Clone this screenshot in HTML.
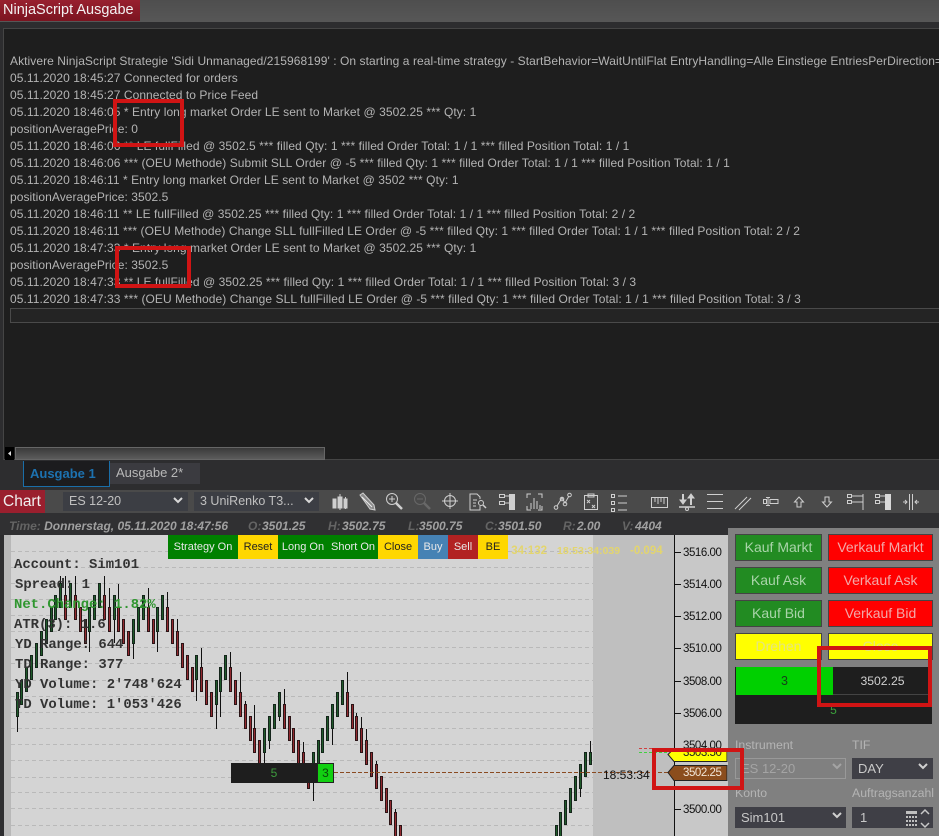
<!DOCTYPE html>
<html><head><meta charset="utf-8"><style>
html,body{margin:0;padding:0}
body{width:939px;height:836px;overflow:hidden;background:#2d2d2f;position:relative;font-family:"Liberation Sans",sans-serif}
.a{position:absolute;white-space:nowrap}
.l{position:absolute;left:10px;width:929px;overflow:hidden;margin-top:1px;font-size:12px;letter-spacing:.065px;line-height:17px;height:17px;color:#b4b4b4;white-space:nowrap}
.b{position:absolute;top:535px;height:24px;line-height:24px;text-align:center;font-size:11px;color:#e8e8e8}
.p{position:absolute;font-size:14px;text-align:center;box-sizing:border-box;border:1px solid #444;height:27px;line-height:25px}
.g{background:#228b22;color:#a9d4a9;width:87px;left:735px}
.r{background:#ff0000;color:#f2a8a8;width:105px;left:828px}
.y{background:#ffff00;color:#e4e480}
.ax{position:absolute;left:683px;font-size:11.5px;letter-spacing:-.45px;color:#111;line-height:14px}
.sl{position:absolute;box-sizing:border-box;background:#3f3f46;color:#c8c8c8;font-size:13px;line-height:21px;padding-left:6px}
.lb{position:absolute;font-size:12.3px;color:#b4b4b4;line-height:14px}
.m{position:absolute;left:14px;margin-top:1px;font-family:"Liberation Mono",monospace;font-weight:bold;font-size:13.9px;line-height:16px;color:#333;white-space:pre}
.red{position:absolute;box-sizing:border-box;border:4px solid #d01414}
.t{position:absolute;top:519px;font-size:12px;font-weight:bold;font-style:italic;line-height:14px;white-space:nowrap;color:#a0a0a0}
.t i{color:#646464}
</style></head><body>

<div class="a" style="left:0;top:0;width:939px;height:22px;background:linear-gradient(#4e4e4e,#575757)"></div>
<div class="a" style="left:0;top:0;width:140px;height:21px;background:linear-gradient(#98202f,#7c1420);color:#f2f2f2;font-size:14.5px;line-height:20px;text-indent:3px">NinjaScript Ausgabe</div>

<div class="a" style="left:3px;top:28px;width:936px;height:432px;box-sizing:border-box;background:#1e1e1e;border:1px solid #454545;border-right:0"></div>
<div class="l" style="top:52px">Aktivere NinjaScript Strategie 'Sidi Unmanaged/215968199' : On starting a real-time strategy - StartBehavior=WaitUntilFlat EntryHandling=Alle Einstiege EntriesPerDirection=1 StopTargetHandling=Per entry</div>
<div class="l" style="top:69px">05.11.2020 18:45:27 Connected for orders</div>
<div class="l" style="top:86px">05.11.2020 18:45:27 Connected to Price Feed</div>
<div class="l" style="top:103px">05.11.2020 18:46:05 * Entry long market Order LE sent to Market @ 3502.25 *** Qty: 1</div>
<div class="l" style="top:120px">positionAveragePrice: 0</div>
<div class="l" style="top:137px">05.11.2020 18:46:06 ** LE fullFilled @ 3502.5 *** filled Qty: 1 *** filled Order Total: 1 / 1 *** filled Position Total: 1 / 1</div>
<div class="l" style="top:154px">05.11.2020 18:46:06 *** (OEU Methode) Submit SLL Order @ -5 *** filled Qty: 1 *** filled Order Total: 1 / 1 *** filled Position Total: 1 / 1</div>
<div class="l" style="top:171px">05.11.2020 18:46:11 * Entry long market Order LE sent to Market @ 3502 *** Qty: 1</div>
<div class="l" style="top:188px">positionAveragePrice: 3502.5</div>
<div class="l" style="top:205px">05.11.2020 18:46:11 ** LE fullFilled @ 3502.25 *** filled Qty: 1 *** filled Order Total: 1 / 1 *** filled Position Total: 2 / 2</div>
<div class="l" style="top:222px">05.11.2020 18:46:11 *** (OEU Methode) Change SLL fullFilled LE Order @ -5 *** filled Qty: 1 *** filled Order Total: 1 / 1 *** filled Position Total: 2 / 2</div>
<div class="l" style="top:239px">05.11.2020 18:47:33 * Entry long market Order LE sent to Market @ 3502.25 *** Qty: 1</div>
<div class="l" style="top:256px">positionAveragePrice: 3502.5</div>
<div class="l" style="top:273px">05.11.2020 18:47:33 ** LE fullFilled @ 3502.25 *** filled Qty: 1 *** filled Order Total: 1 / 1 *** filled Position Total: 3 / 3</div>
<div class="l" style="top:290px">05.11.2020 18:47:33 *** (OEU Methode) Change SLL fullFilled LE Order @ -5 *** filled Qty: 1 *** filled Order Total: 1 / 1 *** filled Position Total: 3 / 3</div>
<div class="a" style="left:10px;top:308px;width:929px;height:15px;box-sizing:border-box;border:1px solid #4a4a4a;border-right:0;background:#242424"></div>

<div class="a" style="left:5px;top:447px;width:9px;height:13px;background:#000"></div>
<svg class="a" style="left:5px;top:447px" width="9" height="13"><path d="M6 4v5L3 6.500z" fill="#ddd"/></svg>
<div class="a" style="left:15px;top:447px;width:310px;height:13px;box-sizing:border-box;border:1px solid #666;background:linear-gradient(#3a3a3a,#5c5c5c)"></div>

<div class="a" style="left:23px;top:461px;width:87px;height:26px;box-sizing:border-box;border:1px solid #1a6ea8;border-top:0;background:#1c1c1e;color:#1d72b0;font-weight:bold;font-size:13px;line-height:25px;text-indent:6px">Ausgabe 1</div>
<div class="a" style="left:110px;top:463px;width:90px;height:21px;background:#3b3b40;color:#b8b8b8;font-size:13px;line-height:20px;text-indent:6px">Ausgabe 2*</div>

<div class="a" style="left:0;top:490px;width:939px;height:23px;background:#4a4a4a"></div>
<div class="a" style="left:0;top:490px;width:45px;height:23px;background:#9a1f2e;color:#f0f0f0;font-size:15.5px;line-height:23px;text-indent:3px">Chart</div>
<div class="a" style="left:63px;top:492px;width:125px;height:19px;background:#3c3e44;color:#c0c0c0;font-size:12.5px;line-height:19px;text-indent:6px">ES 12-20</div>
<div class="a" style="left:194px;top:492px;width:125px;height:19px;background:#3c3e44;color:#c0c0c0;font-size:12.5px;line-height:19px;text-indent:6px">3 UniRenko T3...</div>
<svg class="a" style="left:0;top:488px" width="939" height="28" fill="none" stroke="#cfcfcf" stroke-width="1">
<path d="M174 10l4 4 4-4M305 10l4 4 4-4" stroke="#d8d8d8" stroke-width="2"/>
<g transform="translate(0,-488)">
<path d="M334 501v7M340 494v16M345.500 497v12" />
<rect x="333" y="499" width="3" height="9" fill="#cfcfcf"/><rect x="338" y="497" width="4" height="11" fill="#cfcfcf"/><rect x="344" y="499" width="3" height="9" fill="#cfcfcf"/>
<path d="M360 495l3-2 11 12 1 5-5-1z" fill="#8a8a8a"/><path d="M362 497l10 10" stroke="#ececec"/>
<circle cx="392" cy="499" r="5.500"/><path d="M389 499h6M392 496v6"/><path d="M396 503l6 6" stroke-width="2.500"/>
<g stroke="#686868"><circle cx="420" cy="499" r="5.500"/><path d="M417 499h6"/><path d="M424 503l6 6" stroke-width="2.500"/></g>
<circle cx="450" cy="501" r="5.500"/><path d="M450 493v16M442 501h16"/>
<path d="M480 506v4h-10v-16h7l3 3v2M473 500h4M473 503h3M473 506h3"/><circle cx="481" cy="503" r="2.500"/><path d="M483 505l3 3" stroke-width="1.500"/>
<path d="M499.500 494.500h5v3h-5zM499.500 501.500h5v3h-5zM504 496h5M504 503h5"/><rect x="509" y="494" width="6" height="16" fill="#d0d0d0" stroke="none"/>
<path d="M527 498v-4h4M538 494h4v4M527 506v4h4M538 510h4v-4M531 509v-6M534 509v-11M537 509v-8M540 509v-4" />
<path d="M557 506l5-8 3 5 4-7"/><circle cx="556" cy="507.500" r="1.800"/><circle cx="562" cy="499" r="1.800"/><circle cx="565" cy="504" r="1.800"/><circle cx="569.500" cy="495" r="1.800"/>
<path d="M584.500 495.500h13v14h-13zM588 494h6v3h-6zM587 500l3 3m0-3l-3 3M592 505l3 3m0-3l-3 3"/>
<path d="M611.500 494.500h3v3h-3zM611.500 501.500h3v3h-3zM611.500 508.500h3v3h-3zM618 496h9M618 503h9M618 510h9"/>
<path d="M651.500 497.500h16v10h-16zM655 498v4M658 498v6M661 498v4M664 498v6"/>
<path d="M679 507h16" stroke-width="1.500"/><circle cx="687" cy="509" r="1.500"/><path d="M683 494v6M691 505v-7" stroke-width="2"/><path d="M680 500h6l-3 4zM688 498h6l-3-4z" fill="#cfcfcf"/>
<path d="M707 494.500h16M707 501.500h16M707 508.500h16"/>
<path d="M735 509l12-12M739 510l12-12"/>
<path d="M768 497.500v8M766 497.500h4M766 505.500h4M763.500 499.500h3v4h-3zM770 499.500h8v4h-8z"/>
<path d="M799 497l4.500 5h-2.500v5h-4v-5h-2.500z"/>
<path d="M827 507l4.500-5h-2.500v-5h-4v5h-2.500z"/>
<path d="M847.500 494.500h4v3h-4zM847.500 500.500h4v3h-4zM851 496h12M851 502h12M863 494v16"/>
<path d="M875.500 494.500h4v3h-4zM875.500 500.500h4v3h-4zM879 496h6M879 502h6"/><rect x="885" y="494" width="6" height="16" fill="#d8d8d8" stroke="none"/>
<path d="M909.500 494v16M912.500 494v16M903 502h4M919 502h-4M905 500l2 2-2 2M917 500l-2 2 2 2"/>
</g></svg>

<div class="a" style="left:0;top:513px;width:939px;height:22px;background:#303032"></div>
<div class="t" style="left:9px"><i>Time:</i> Donnerstag, 05.11.2020 18:47:56</div>
<div class="t" style="left:248px"><i>O:</i></div><div class="t" style="left:262px">3501.25</div>
<div class="t" style="left:328px"><i>H:</i></div><div class="t" style="left:342px">3502.75</div>
<div class="t" style="left:408px"><i>L:</i></div><div class="t" style="left:419px">3500.75</div>
<div class="t" style="left:485px"><i>C:</i></div><div class="t" style="left:498px">3501.50</div>
<div class="t" style="left:563px"><i>R:</i></div><div class="t" style="left:577px">2.00</div>
<div class="t" style="left:622px"><i>V:</i></div><div class="t" style="left:635px">4404</div>

<div class="a" style="left:4px;top:535px;width:7px;height:301px;background:#b8b8b8"></div>
<div class="a" style="left:11px;top:535px;width:582px;height:301px;background:#d4d4d4"></div>
<div class="a" style="left:593px;top:535px;width:81px;height:301px;background:#bfbfbf"></div>
<div class="a" style="left:675px;top:535px;width:54px;height:301px;background:#c8c8c8"></div>
<div class="a" style="left:674px;top:535px;width:1px;height:301px;background:#111"></div>

<svg class="a" style="left:0;top:0" width="939" height="836">
<path stroke="#b9b9b9" stroke-dasharray="4 3" fill="none" d="M11 551.500H593M11 567.500H593M11 583.500H593M11 599.500H593M11 615.500H593M11 631.500H593M11 647.500H593M11 663.500H593M11 680.500H593M11 696.500H593M11 712.500H593M11 728.500H593M11 744.500H593M11 760.500H593M11 777.500H593M11 792.500H593M11 808.500H593M11 825.500H593"/>
<path stroke="#111" fill="none" d="M674 552.500h7M674 584.500h7M674 616.500h7M674 648.500h7M674 681.500h7M674 713.500h7M674 809.500h7"/>
<path stroke="#111" fill="none" d="M17.500 716V732M60.500 576V583M65.500 576V595M75.500 576V595M89.500 631V652M104.500 576V595M109.500 588V607M114.500 619V643M118.500 584V607M133.500 643V659M148.500 588V607M157.500 631V652M167.500 592V607M177.500 619V631M196.500 680V701M201.500 648V667M216.500 704V729M220.500 691V717M230.500 652V667M240.500 672V692M245.500 701V704M254.500 705V728M264.500 752V763M269.500 740V749M279.500 716V721M284.500 689V704M303.500 742V752M313.500 776V801M332.500 728V745M347.500 672V692M356.500 713V716M361.500 717V728M366.500 729V740M376.500 761V764M395.500 809V812M580.500 788V797M590.500 741V752"/>
<path fill="#1f5a2a" stroke="#14241a" d="M16.500 692.500h2v24h-2zM20.500 680.500h2v24h-2zM25.500 667.500h2v24h-2zM30.500 655.500h2v24h-2zM35.500 643.500h2v24h-2zM40.500 631.500h2v24h-2zM45.500 619.500h2v24h-2zM50.500 607.500h2v24h-2zM54.500 595.500h2v24h-2zM59.500 583.500h2v24h-2zM69.500 583.500h2v24h-2zM88.500 607.500h2v24h-2zM93.500 595.500h2v24h-2zM98.500 583.500h2v24h-2zM113.500 595.500h2v24h-2zM132.500 619.500h2v24h-2zM137.500 607.500h2v24h-2zM142.500 595.500h2v24h-2zM156.500 607.500h2v24h-2zM161.500 595.500h2v24h-2zM195.500 655.500h2v24h-2zM215.500 680.500h2v24h-2zM219.500 667.500h2v24h-2zM224.500 655.500h2v24h-2zM263.500 728.500h2v24h-2zM268.500 716.500h2v24h-2zM273.500 704.500h2v24h-2zM278.500 692.500h2v24h-2zM312.500 752.500h2v24h-2zM317.500 740.500h2v24h-2zM321.500 728.500h2v24h-2zM326.500 716.500h2v24h-2zM331.500 704.500h2v24h-2zM336.500 692.500h2v24h-2zM341.500 680.500h2v24h-2zM555.500 825.500h2v24h-2zM559.500 812.500h2v24h-2zM564.500 800.500h2v24h-2zM569.500 788.500h2v24h-2zM574.500 776.500h2v24h-2zM579.500 764.500h2v24h-2zM584.500 752.500h2v24h-2zM589.500 752.500h2v12h-2z"/>
<path fill="#922a30" stroke="#2a1416" d="M64.500 595.500h2v24h-2zM74.500 595.500h2v24h-2zM79.500 607.500h2v24h-2zM84.500 619.500h2v24h-2zM103.500 595.500h2v24h-2zM108.500 607.500h2v24h-2zM117.500 607.500h2v24h-2zM122.500 619.500h2v24h-2zM127.500 631.500h2v24h-2zM147.500 607.500h2v24h-2zM152.500 619.500h2v24h-2zM166.500 607.500h2v24h-2zM171.500 619.500h2v24h-2zM176.500 631.500h2v24h-2zM181.500 643.500h2v24h-2zM186.500 655.500h2v24h-2zM191.500 667.500h2v24h-2zM200.500 667.500h2v24h-2zM205.500 680.500h2v24h-2zM210.500 692.500h2v24h-2zM229.500 667.500h2v24h-2zM234.500 680.500h2v24h-2zM239.500 692.500h2v24h-2zM244.500 704.500h2v24h-2zM249.500 716.500h2v24h-2zM253.500 728.500h2v24h-2zM258.500 740.500h2v24h-2zM283.500 704.500h2v24h-2zM288.500 716.500h2v24h-2zM292.500 728.500h2v24h-2zM297.500 740.500h2v24h-2zM302.500 752.500h2v24h-2zM307.500 764.500h2v24h-2zM346.500 692.500h2v24h-2zM351.500 704.500h2v24h-2zM355.500 716.500h2v24h-2zM360.500 728.500h2v24h-2zM365.500 740.500h2v24h-2zM370.500 752.500h2v24h-2zM375.500 764.500h2v24h-2zM380.500 776.500h2v24h-2zM385.500 788.500h2v24h-2zM389.500 800.500h2v24h-2zM394.500 812.500h2v24h-2zM399.500 825.500h2v24h-2z"/>
<path stroke="#8a4a20" stroke-dasharray="4 2" fill="none" d="M334 772.500H670"/>
<path stroke="#d04040" stroke-dasharray="3 2" fill="none" d="M639 748.500h29"/>
<path stroke="#40d040" stroke-dasharray="3 2" fill="none" d="M639 752.500h29"/>
</svg>

<div class="m" style="top:556px">Account: Sim101</div>
<div class="m" style="top:576px;left:15px">Spread: 1</div>
<div class="m" style="top:596px;color:#2f962f">Net.Change: 1.82%</div>
<div class="m" style="top:616px">ATR(3): 1.6</div>
<div class="m" style="top:636px;left:15px">YD Range: 644</div>
<div class="m" style="top:656px;left:15px">TD Range: 377</div>
<div class="m" style="top:676px;left:15px">YD Volume: 2'748'624</div>
<div class="m" style="top:696px;left:15px">TD Volume: 1'053'426</div>

<div class="a" style="left:508px;top:544px;width:39px;overflow:hidden;text-align:right;font-size:11.500px;font-weight:bold;color:#e3d56e;line-height:14px">34:132</div>
<div class="a" style="left:557px;top:544px;font-size:10.500px;font-weight:bold;color:#e3d56e;line-height:14px">18:53:34:039</div>
<div class="a" style="left:630px;top:544px;font-size:11.500px;font-weight:bold;color:#e3d56e;line-height:14px">-0.094</div>

<div class="b" style="left:168px;width:70px;background:#008000">Strategy On</div>
<div class="b" style="left:238px;width:40px;background:#ffd700;color:#222">Reset</div>
<div class="b" style="left:278px;width:50px;background:#008000">Long On</div>
<div class="b" style="left:328px;width:50px;background:#008000">Short On</div>
<div class="b" style="left:378px;width:40px;background:#ffd700;color:#222">Close</div>
<div class="b" style="left:418px;width:30px;background:#4682b4">Buy</div>
<div class="b" style="left:448px;width:30px;background:#b22222">Sell</div>
<div class="b" style="left:478px;width:30px;background:#ffd700;color:#222">BE</div>

<div class="a" style="left:231px;top:763px;width:86px;height:20px;background:#1e1e1e;color:#3d9a3d;font-size:12px;line-height:20px;text-align:center">5</div>
<div class="a" style="left:317px;top:763px;width:17px;height:20px;box-sizing:border-box;border:1px solid #222;background:#12d012;color:#0a4a0a;font-size:12px;line-height:18px;text-align:center">3</div>

<div class="ax" style="top:546px">3516.00</div>
<div class="ax" style="top:578px">3514.00</div>
<div class="ax" style="top:610px">3512.00</div>
<div class="ax" style="top:642px">3510.00</div>
<div class="ax" style="top:675px">3508.00</div>
<div class="ax" style="top:707px">3506.00</div>
<div class="ax" style="top:739px">3504.00</div>
<div class="ax" style="top:803px">3500.00</div>
<div class="a" style="left:603px;top:768px;font-size:12px;color:#111;line-height:14px">18:53:34</div>

<svg class="a" style="left:667px;top:745px" width="62" height="40">
<path d="M1 9.500L7 3.500H60V16.500H7z" fill="#ffff00" stroke="#222"/>
<path d="M1 27.500L7 20.500H60V35.500H7z" fill="#8b4d1d" stroke="#222"/>
</svg>
<div class="ax" style="top:746px;color:#222">3503.50</div>
<div class="ax" style="top:766px;color:#f2e6d8">3502.25</div>

<div class="a" style="left:728px;top:528px;width:211px;height:308px;background:#808080"></div>
<div class="p g" style="top:534px">Kauf Markt</div>
<div class="p r" style="top:534px">Verkauf Markt</div>
<div class="p g" style="top:567px">Kauf Ask</div>
<div class="p r" style="top:567px">Verkauf Ask</div>
<div class="p g" style="top:600px">Kauf Bid</div>
<div class="p r" style="top:600px">Verkauf Bid</div>
<div class="p y" style="top:633px;left:735px;width:87px">Drehen</div>
<div class="p y" style="top:633px;left:828px;width:105px">Close</div>

<div class="a" style="left:735px;top:667px;width:197px;height:57px;background:#1e1e1e"></div>
<div class="a" style="left:736px;top:667px;width:97px;height:28px;background:#00d000;color:#14401a;font-size:12.5px;line-height:28px;text-align:center">3</div>
<div class="a" style="left:833px;top:667px;width:99px;height:28px;box-sizing:border-box;border-bottom:1px solid #444;color:#d0d0d0;font-size:12.2px;line-height:28px;text-align:center">3502.25</div>
<div class="a" style="left:735px;top:703px;width:197px;color:#3aa03a;font-size:12px;line-height:14px;text-align:center">5</div>

<div class="lb" style="left:735px;top:738px">Instrument</div>
<div class="lb" style="left:852px;top:738px">TIF</div>
<div class="sl" style="left:735px;top:758px;width:111px;height:21px;background:#808080;border:1px solid #999;color:#a4a4a4;line-height:19px;padding-left:5px">ES 12-20</div>
<div class="sl" style="left:852px;top:758px;width:81px;height:21px">DAY</div>
<div class="lb" style="left:735px;top:786px">Konto</div>
<div class="lb" style="left:852px;top:786px">Auftragsanzahl</div>
<div class="sl" style="left:735px;top:807px;width:111px;height:21px">Sim101</div>
<div class="sl" style="left:852px;top:807px;width:81px;height:21px;padding-left:8px">1</div>
<svg class="a" style="left:730px;top:755px" width="209" height="76" fill="none">
<path d="M103 9l4 4 4-4" stroke="#a4a4a4" stroke-width="2"/>
<path d="M189 9l4 4 4-4" stroke="#d0d0d0" stroke-width="2"/>
<path d="M103 58l4 4 4-4" stroke="#d0d0d0" stroke-width="2"/>
<path d="M186 59l4-4 4 4M186 68l4 4 4-4" stroke="#c8c8c8" stroke-width="1.500" transform="translate(5,0)"/>
<path d="M176 56h11v3h-11zM176 61h2v2h-2zM179 61h2v2h-2zM182 61h2v2h-2zM185 61h2v2h-2zM176 65h2v2h-2zM179 65h2v2h-2zM182 65h2v2h-2zM185 65h2v2h-2zM176 69h2v2h-2zM179 69h2v2h-2zM182 69h2v2h-2zM185 69h2v2h-2z" fill="#c0c0c0"/>
</svg>

<div class="red" style="left:113px;top:99px;width:71px;height:48px"></div>
<div class="red" style="left:115px;top:246px;width:76px;height:42px"></div>
<div class="red" style="left:817px;top:646px;width:115px;height:61px"></div>
<div class="red" style="left:652px;top:748px;width:92px;height:42px"></div>
</body></html>
